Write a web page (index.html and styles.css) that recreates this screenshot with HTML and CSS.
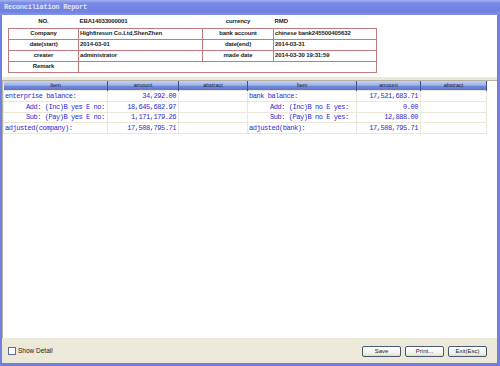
FILE: index.html
```html
<!DOCTYPE html>
<html lang="en">
<head>
    <meta charset="UTF-8">
    <title>Reconciliation Report</title>
    <link rel="stylesheet" href="styles.css">
</head>
<body>
    <div class="window">
        <div class="titlebar">Reconciliation Report</div>
        <div class="frame">
            <div class="info">
                <table class="info-table">
                    <colgroup>
                        <col class="c-label"><col class="c-value"><col class="c-label2"><col class="c-value2">
                    </colgroup>
                    <tr class="plain">
                        <td class="lbl">NO.</td>
                        <td class="val">EBA14033000001</td>
                        <td class="lbl">currency</td>
                        <td class="val">RMD</td>
                    </tr>
                    <tr>
                        <td class="lbl">Company</td>
                        <td class="val">Highfiresun Co.Ltd,ShenZhen</td>
                        <td class="lbl">bank account</td>
                        <td class="val">chinese bank245500405632</td>
                    </tr>
                    <tr>
                        <td class="lbl">date(start)</td>
                        <td class="val">2014-03-01</td>
                        <td class="lbl">date(end)</td>
                        <td class="val">2014-03-31</td>
                    </tr>
                    <tr>
                        <td class="lbl">creater</td>
                        <td class="val">administrator</td>
                        <td class="lbl">made date</td>
                        <td class="val">2014-03-30 19:31:59</td>
                    </tr>
                    <tr>
                        <td class="lbl">Remark</td>
                        <td class="val" colspan="3"></td>
                    </tr>
                </table>
            </div>
            <div class="split"></div>
            <div class="grid-panel">
                <table class="grid">
                    <colgroup>
                        <col style="width:104px"><col style="width:71px"><col style="width:69px">
                        <col style="width:109px"><col style="width:64px"><col style="width:66px">
                    </colgroup>
                    <tr class="r0">
                        <th>Item</th><th>amount</th><th>abstract</th>
                        <th>Item</th><th>amount</th><th>abstract</th>
                    </tr>
                    <tr class="r1">
                        <td>enterprise balance:</td><td class="num">34,292.00</td><td></td>
                        <td>bank balance:</td><td class="num">17,521,683.71</td><td></td>
                    </tr>
                    <tr class="r1">
                        <td class="sub">Add: (Inc)B yes E no:</td><td class="num">18,645,682.97</td><td></td>
                        <td class="sub">Add: (Inc)B no E yes:</td><td class="num">0.00</td><td></td>
                    </tr>
                    <tr class="r2">
                        <td class="sub">Sub: (Pay)B yes E no:</td><td class="num">1,171,179.26</td><td></td>
                        <td class="sub">Sub: (Pay)B no E yes:</td><td class="num">12,888.00</td><td></td>
                    </tr>
                    <tr class="r1">
                        <td>adjusted(company):</td><td class="num">17,508,795.71</td><td></td>
                        <td>adjusted(bank):</td><td class="num">17,508,795.71</td><td></td>
                    </tr>
                </table>
            </div>
            <div class="footer">
                <label class="check"><span class="box"></span>Show Detail</label>
                <div class="buttons">
                    <button class="btn">Save</button>
                    <button class="btn">Print...</button>
                    <button class="btn">Exit(Esc)</button>
                </div>
            </div>
        </div>
    </div>
</body>
</html>
```

FILE: styles.css
```css
body{
    margin: 0;
    width: 500px;
    height: 366px;
    overflow: hidden;
    background: #fff;
}
.window{
    height: 366px;
    display: flex;
    flex-direction: column;
}
.titlebar{
    height: 15px;
    flex: none;
    box-sizing: border-box;
    padding: 2px 0 0 4px;
    background: linear-gradient(#a4b0f2, #7b8be6 20%, #7080e0 75%, #8494e6);
    color: #dfe3f7;
    font-family: "Liberation Mono", monospace;
    font-weight: bold;
    font-size: 7px;
    letter-spacing: -0.25px;
    line-height: 10px;
}
.frame{
    flex: 1;
    display: flex;
    flex-direction: column;
    border: solid #7080e0;
    border-width: 0 3px 3px 2px;
    min-height: 0;
}
.info{
    height: 62px;
    flex: none;
    box-sizing: border-box;
    padding: 1px 0 0 6px;
    background: #fff;
}
.info-table{
    border-collapse: collapse;
    table-layout: fixed;
    width: 368px;
    font-family: "Liberation Sans", Arial, sans-serif;
    font-weight: bold;
    font-size: 6px;
    letter-spacing: -0.1px;
    color: #1c1c1c;
}
.c-label{ width: 70px; }
.c-value{ width: 124px; }
.c-label2{ width: 71px; }
.c-value2{ width: 103px; }
.info-table tr{
    height: 11px;
}
.info-table td{
    border: 1px solid #bf7b7b;
    padding: 0 1px;
    white-space: nowrap;
    overflow: hidden;
    line-height: 9px;
}
.info-table tr.plain{
    height: 12px;
}
.info-table tr.plain td{
    border: none;
}
.lbl{
    text-align: center;
}
.val{
    text-align: left;
}
.split{
    height: 3px;
    flex: none;
    background: #ece9d8;
}
.grid-panel{
    flex: 1;
    background: #fff;
    border-top: 1px solid #b5b2a4;
    border-left: 1px solid #b5b2a4;
}
.grid{
    border-collapse: collapse;
    table-layout: fixed;
    width: 483px;
    font-family: "Liberation Mono", monospace;
    font-size: 7px;
    letter-spacing: -0.45px;
    color: #2b2bd8;
}
.grid th{
    height: 9px;
    padding: 0;
    font-family: "Liberation Sans", Arial, sans-serif;
    font-weight: normal;
    font-size: 5.5px;
    letter-spacing: 0;
    color: #1d2040;
    background: linear-gradient(#c3d0f4, #9fb3ec 45%, #6f8ad8 60%, #5a76cc);
    border-right: 1px solid #3e5290;
    border-left: 1px solid #dfe6fa;
    line-height: 9px;
}
.grid tr.r1{ height: 11px; }
.grid tr.r2{ height: 10px; }
.grid td{
    padding: 0 1px;
    border: 1px solid #ebe8da;
    white-space: nowrap;
    overflow: hidden;
    line-height: 9px;
}
.grid td.sub{
    padding-left: 22px;
}
.grid td.num{
    text-align: right;
    padding-right: 2px;
}
.footer{
    height: 25px;
    flex: none;
    background: #ece9d8;
    display: flex;
    align-items: center;
    justify-content: space-between;
    padding: 0 10px 0 6px;
    font-family: "Liberation Sans", Arial, sans-serif;
    font-size: 6.5px;
    color: #222;
}
.check{
    display: flex;
    align-items: center;
    gap: 2px;
}
.box{
    width: 6px;
    height: 6px;
    border: 1px solid #5b6f93;
    background: #fff;
}
.buttons{
    display: flex;
    gap: 4px;
    padding-top: 2px;
}
.btn{
    width: 39px;
    height: 11px;
    padding: 0;
    border: 1px solid #4b5872;
    border-radius: 2px;
    background: linear-gradient(#ffffff, #f2f1ea 70%, #dedbcc);
    font-family: "Liberation Sans", Arial, sans-serif;
    font-size: 6px;
    color: #222;
    line-height: 9px;
}
```
